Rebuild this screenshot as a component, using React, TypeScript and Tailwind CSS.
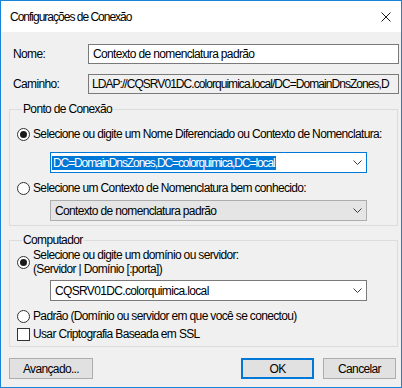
import type React from "react"

function Radio({ checked }: { checked?: boolean }) {
  return (
    <span className="flex h-[13px] w-[13px] shrink-0 items-center justify-center rounded-full border border-[#333333] bg-white">
      {checked && <span className="h-[7px] w-[7px] rounded-full bg-[#1a1a1a]" />}
    </span>
  )
}

function Chevron() {
  return (
    <svg width="9" height="5" viewBox="0 0 9 5" className="shrink-0">
      <path d="M0.5 0.5 L4.5 4.5 L8.5 0.5" fill="none" stroke="#3c3c3c" strokeWidth="1" />
    </svg>
  )
}

function Combo({ children, className }: { children: React.ReactNode; className: string }) {
  return (
    <div className={`ml-[33px] flex h-[21px] w-[317px] items-center justify-between pr-[4px] ${className}`}>
      {children}
      <Chevron />
    </div>
  )
}

export default function App() {
  return (
    <div className="flex h-[388px] w-[402px] flex-col border border-[#1883d7] bg-[#f0f0f0] font-['Liberation_Sans',Arial,sans-serif] text-[12px] tracking-[-0.65px] text-black">
      {/* Title bar */}
      <div className="flex h-[31px] shrink-0 items-center justify-between bg-white pl-[9px] pr-[10px]">
        <span className="leading-[16px] tracking-[-1px]">Configurações de Conexão</span>
        <svg width="10" height="10" viewBox="0 0 10 10">
          <path d="M0.5 0.5 L9.5 9.5 M9.5 0.5 L0.5 9.5" stroke="#1a1a1a" strokeWidth="1" />
        </svg>
      </div>

      {/* Body */}
      <div className="flex flex-col pl-[8px] pr-[2px] pt-[12px]">
        <div className="flex h-[20px] items-center">
          <span className="w-[79px] pl-[4px]">Nome:</span>
          <div className="flex h-[20px] flex-1 items-center border border-[#7a7a7a] bg-white px-[4px]">
            Contexto de nomenclatura padrão
          </div>
        </div>
        <div className="mt-[10px] flex h-[20px] items-center">
          <span className="w-[79px] pl-[4px]">Caminho:</span>
          <div className="flex h-[20px] min-w-0 flex-1 items-center overflow-hidden whitespace-nowrap border border-[#7a7a7a] bg-[#f0f0f0] px-[3px] tracking-[-0.95px]">
            LDAP://CQSRV01DC.colorquimica.local/DC=DomainDnsZones,D
          </div>
        </div>

        {/* Ponto de Conexão */}
        <fieldset className="mr-[1px] mt-[7px] border border-[#dcdcdc] pb-[4px] pl-[7px]">
          <legend className="ml-[5px] px-[1px] leading-[16px]">Ponto de Conexão</legend>
          <div className="mt-[9px] flex h-[16px] items-center gap-[3px]">
            <Radio checked />
            <span className="whitespace-nowrap">Selecione ou digite um Nome Diferenciado ou Contexto de Nomenclatura:</span>
          </div>
          <div className="mt-[10px]">
            <Combo className="border border-[#0078d7] bg-white pl-[1px]">
              <span className="bg-[#0078d7] px-[1px] leading-[14px] tracking-[-1.1px] text-white">DC=DomainDnsZones,DC=colorquimica,DC=local</span>
            </Combo>
          </div>
          <div className="mt-[7px] flex h-[16px] items-center gap-[3px]">
            <Radio />
            <span>Selecione um Contexto de Nomenclatura bem conhecido:</span>
          </div>
          <div className="mt-[4px]">
            <Combo className="border border-[#adadad] bg-[#e5e5e5] pl-[4px]">
              <span>Contexto de nomenclatura padrão</span>
            </Combo>
          </div>
        </fieldset>

        {/* Computador */}
        <fieldset className="mr-[1px] mt-[6px] border border-[#dcdcdc] pb-[4px] pl-[7px]">
          <legend className="ml-[5px] px-[1px] leading-[16px]">Computador</legend>
          <div className="flex items-center gap-[3px]">
            <Radio checked />
            <span className="leading-[14px]">
              Selecione ou digite um domínio ou servidor:
              <br />
              (Servidor | Domínio [:porta])
            </span>
          </div>
          <div className="mt-[4px]">
            <Combo className="border border-[#7a7a7a] bg-white pl-[4px]">
              <span>CQSRV01DC.colorquimica.local</span>
            </Combo>
          </div>
          <div className="mt-[7px] flex h-[16px] items-center gap-[3px]">
            <Radio />
            <span>Padrão (Domínio ou servidor em que você se conectou)</span>
          </div>
          <div className="mt-[2px] flex h-[16px] items-center gap-[3px]">
            <span className="h-[13px] w-[13px] shrink-0 border border-[#333333] bg-white" />
            <span>Usar Criptografia Baseada em SSL</span>
          </div>
        </fieldset>

        {/* Buttons */}
        <div className="mt-[11px] flex items-center pr-[3px]">
          <button className="flex h-[21px] w-[84px] items-center justify-center border border-[#adadad] bg-[#e1e1e1]">
            Avançado...
          </button>
          <div className="flex-1" />
          <button className="flex h-[21px] w-[73px] items-center justify-center border-2 border-[#0078d7] bg-[#e1e1e1]">
            OK
          </button>
          <button className="ml-[9px] flex h-[21px] w-[73px] items-center justify-center border border-[#adadad] bg-[#e1e1e1]">
            Cancelar
          </button>
        </div>
      </div>
    </div>
  )
}
